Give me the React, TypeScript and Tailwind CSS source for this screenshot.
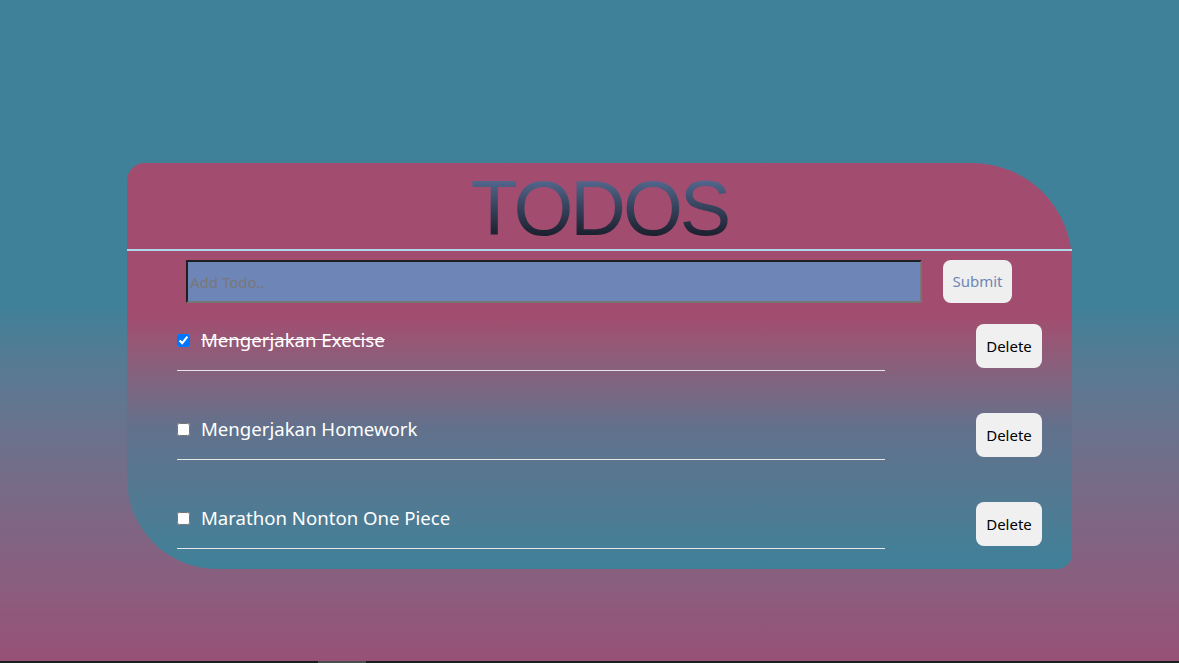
import { useState } from 'react';

interface TodoItem {
	id: number;
	title: string;
	done: boolean;
}

const initialTodos: TodoItem[] = [
	{ id: 1, title: 'Mengerjakan Execise', done: true },
	{ id: 2, title: 'Mengerjakan Homework', done: false },
	{ id: 3, title: 'Marathon Nonton One Piece', done: false },
];

const TodoRow = (props: {
	todo: TodoItem;
	onToggle: () => void;
	onDelete: () => void;
}) => {
	return (
		<li className="flex items-start">
			<div className="w-[708px] h-[47px] pb-[14px] flex items-center border-b border-[#e6e6e6]">
				<input
					type="checkbox"
					checked={props.todo.done}
					onChange={props.onToggle}
					className="w-[13px] h-[13px]"
				/>
				<span
					className={
						props.todo.done
							? 'ml-[11px] text-[18.6px] text-white line-through'
							: 'ml-[11px] text-[18.6px] text-white'
					}
				>
					{props.todo.title}
				</span>
			</div>
			<button
				onClick={props.onDelete}
				className="ml-[91px] w-[66px] h-[44px] rounded-[8px] bg-[#f0f0f0] text-[15px] text-black"
			>
				Delete
			</button>
		</li>
	);
};

export default function App() {
	const [todos, setTodos] = useState<TodoItem[]>(initialTodos);
	const [text, setText] = useState('');

	return (
		<div className="h-[663px] w-[1179px] flex flex-col overflow-hidden font-['Noto_Sans',sans-serif]">
			<main className="flex-1 bg-linear-to-b from-[#3e8199] from-[46%] to-[#975177]">
				<section className="mt-[163px] ml-[127px] w-[945px] h-[406px] rounded-tl-[18px] rounded-tr-[100px] rounded-bl-[90px] rounded-br-[15px] bg-linear-to-b from-[#a24d6f] from-[38%] via-[#62718c] via-[65%] to-[#3e8199]">
					<header className="h-[86px] flex justify-center">
						<h1 className="pt-[2px] text-[77px] leading-[86px] tracking-[-3px] font-['Liberation_Sans',sans-serif] bg-linear-to-b from-[#6680ae] to-[#10111a] bg-clip-text text-transparent">
							TODOS
						</h1>
					</header>
					<div className="h-[2px] bg-[#add8e6]" />
					<form
						className="flex mt-[9px] ml-[59px]"
						onSubmit={function (e) {
							e.preventDefault();
							if (!text) return;
							setTodos([...todos, { id: Date.now(), title: text, done: false }]);
							setText('');
						}}
					>
						<input
							value={text}
							onChange={(e) => setText(e.target.value)}
							placeholder="Add Todo.."
							className="w-[736px] h-[43px] px-[2px] bg-[#6e85b7] border-2 border-t-[#1f1f1f] border-l-[#1f1f1f] border-b-[#767676] border-r-[#767676] text-[15px] placeholder:text-[#787878] outline-none"
						/>
						<button
							type="submit"
							className="ml-[21px] w-[69px] h-[43px] rounded-[8px] bg-[#efefef] text-[15px] text-[#6e85b7]"
						>
							Submit
						</button>
					</form>
					<ul className="mt-[21px] ml-[50px] flex flex-col gap-[42px]">
						{todos.map((todo) => (
							<TodoRow
								key={todo.id}
								todo={todo}
								onToggle={() =>
									setTodos(
										todos.map((t) =>
											t.id === todo.id ? { ...t, done: !t.done } : t,
										),
									)
								}
								onDelete={() => setTodos(todos.filter((t) => t.id !== todo.id))}
							/>
						))}
					</ul>
				</section>
			</main>
			<div className="h-[2px] bg-[#1c1e1d] flex">
				<div className="ml-[318px] w-[48px] bg-[#4d4d4d]" />
			</div>
		</div>
	);
}
